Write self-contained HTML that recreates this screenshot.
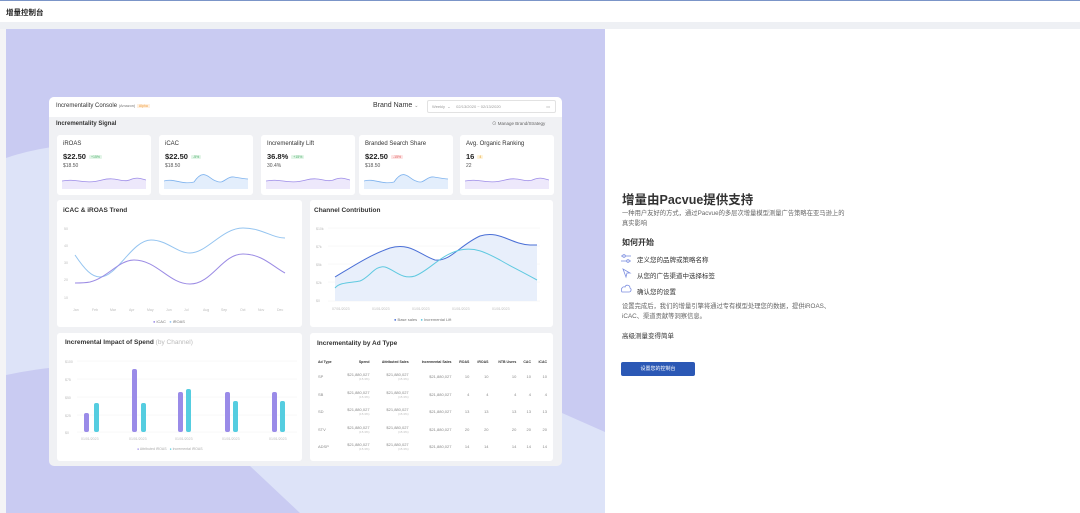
<!DOCTYPE html>
<html><head><meta charset="utf-8"><style>
*{margin:0;padding:0;box-sizing:border-box}
body{width:1080px;height:513px;overflow:hidden;background:#fff;font-family:"Liberation Sans","Noto Sans CJK SC",sans-serif;position:relative;color:#333}
.a{position:absolute}
.p{position:absolute;background:#fff;border-radius:3px}
.t{font-size:6.5px;color:#333;font-weight:bold}
.k{position:absolute;background:#fff;border-radius:3px;top:135px;height:60px;width:94px}
.k .n{position:absolute;left:6px;top:6px;font-size:6px;color:#333}
.k .v{position:absolute;left:6px;top:17px;font-size:7.5px;font-weight:bold;color:#222}
.k .b{font-size:3.5px;padding:0 2px;border-radius:1px;margin-left:3px;font-weight:normal;vertical-align:middle}
.k .s{position:absolute;left:6px;top:28px;font-size:5px;color:#555}
.k svg{position:absolute;left:5px;top:38px}
.g{background:#e3f5e8;color:#4caf6a}
.r{background:#fde4e4;color:#e06060}
.o{background:#fff3d9;color:#e0a030}
.ax{font-size:3.5px;fill:#bbb}
table{border-collapse:collapse;font-size:4px;color:#888}
td,th{height:17.5px;text-align:right;padding:0 2px}
th{font-size:3.5px;color:#333;height:13px}
td small{display:block;font-size:3px;color:#bbb}
.step{position:absolute;left:637px;font-size:6.5px;color:#333}
</style></head><body>
<div class="a" style="left:0;top:0;width:1080px;height:1px;background:#7b95c8"></div>
<div class="a" style="left:6px;top:7px;font-size:7.5px;font-weight:bold;color:#222">增量控制台</div>
<div class="a" style="left:0;top:22px;width:1080px;height:7px;background:#eef0f4"></div>
<div class="a" style="left:0;top:29px;width:6px;height:484px;background:#f4f4f6"></div>
<svg class="a" style="left:6px;top:29px" width="599" height="484">
<rect width="599" height="484" fill="#c9cbf2"/>
<path d="M0 129 C15 124 30 120 60 116 L556 116 L556 384 L599 403 L599 484 L294 484 L244 437 L100 437 L43 339 C25 341 10 344 0 346 Z" fill="#dde3f8"/>
</svg>
<!-- card -->
<div class="a" style="left:49px;top:97px;width:513px;height:369px;background:#f0f1f4;border-radius:5px;overflow:hidden">
<div class="a" style="left:0;top:0;width:513px;height:20px;background:#fff"></div>
<div class="a" style="left:7px;top:6px;font-size:6px;color:#333">Incrementality Console <span style="font-size:3.8px;color:#777">(Amazon)</span> <span style="font-size:3.5px;background:#fff0e0;color:#f0a040;padding:0 2px">Alpha</span></div>
<div class="a" style="left:324px;top:5px;font-size:7px;color:#333">Brand Name <span style="font-size:5px;color:#888">⌄</span></div>
<div class="a" style="left:378px;top:3px;width:129px;height:13px;border:1px solid #e2e2e2;border-radius:2px;font-size:4px;color:#999;line-height:11px;padding-left:4px">Weekly &nbsp;⌄ &nbsp;&nbsp;&nbsp; 02/13/2020 ~ 02/13/2020<span style="position:absolute;right:5px">▭</span></div>
<div class="a t" style="left:7px;top:24px;font-size:6px">Incrementality Signal</div>
<div class="a" style="left:443px;top:24px;font-size:4.5px;color:#666">⊙ Manage Brand/Strategy</div>
</div>
<div class="k" style="left:57px"><div class="n">iROAS</div><div class="v">$22.50<span class="b g">+15%</span></div><div class="s">$18.50</div><svg width="84" height="16"><path d="M0 8 C15 5 22 12 40 7 C55 3 60 11 70 6 C76 4 80 6 84 7 L84 16 L0 16Z" fill="#ede8fb"/><path d="M0 8 C15 5 22 12 40 7 C55 3 60 11 70 6 C76 4 80 6 84 7" fill="none" stroke="#9d8ce8" stroke-width=".8"/></svg></div>
<div class="k" style="left:159px"><div class="n">iCAC</div><div class="v">$22.50<span class="b g">-5%</span></div><div class="s">$18.50</div><svg width="84" height="16"><path d="M0 8 C10 5 18 12 30 9 C40 -6 45 6 52 8 C60 12 62 3 70 4 C76 5 80 6 84 6 L84 16 L0 16Z" fill="#e3eefc"/><path d="M0 8 C10 5 18 12 30 9 C40 -6 45 6 52 8 C60 12 62 3 70 4 C76 5 80 6 84 6" fill="none" stroke="#7fb3ee" stroke-width=".8"/></svg></div>
<div class="k" style="left:261px"><div class="n">Incrementality Lift</div><div class="v">36.8%<span class="b g">+15%</span></div><div class="s">30.4%</div><svg width="84" height="16"><path d="M0 8 C15 5 22 12 40 7 C55 3 60 11 70 6 C76 4 80 6 84 7 L84 16 L0 16Z" fill="#ede8fb"/><path d="M0 8 C15 5 22 12 40 7 C55 3 60 11 70 6 C76 4 80 6 84 7" fill="none" stroke="#9d8ce8" stroke-width=".8"/></svg></div>
<div class="k" style="left:359px"><div class="n">Branded Search Share</div><div class="v">$22.50<span class="b r">-15%</span></div><div class="s">$18.50</div><svg width="84" height="16"><path d="M0 8 C10 5 18 12 30 9 C40 -6 45 6 52 8 C60 12 62 3 70 4 C76 5 80 6 84 6 L84 16 L0 16Z" fill="#e3eefc"/><path d="M0 8 C10 5 18 12 30 9 C40 -6 45 6 52 8 C60 12 62 3 70 4 C76 5 80 6 84 6" fill="none" stroke="#7fb3ee" stroke-width=".8"/></svg></div>
<div class="k" style="left:460px"><div class="n">Avg. Organic Ranking</div><div class="v">16<span class="b o">4</span></div><div class="s">22</div><svg width="84" height="16"><path d="M0 8 C15 5 22 12 40 7 C55 3 60 11 70 6 C76 4 80 6 84 7 L84 16 L0 16Z" fill="#ede8fb"/><path d="M0 8 C15 5 22 12 40 7 C55 3 60 11 70 6 C76 4 80 6 84 7" fill="none" stroke="#9d8ce8" stroke-width=".8"/></svg></div>

<div class="p" style="left:57px;top:200px;width:245px;height:127px">
<div class="a t" style="left:6px;top:7px">iCAC &amp; iROAS Trend</div>
<svg class="a" style="left:0;top:0" width="245" height="127">
<g class="ax"><text x="7" y="30">50</text><text x="7" y="47">40</text><text x="7" y="64">30</text><text x="7" y="81">20</text><text x="7" y="99">10</text>
<text x="16" y="111">Jan</text><text x="35" y="111">Feb</text><text x="53" y="111">Mar</text><text x="72" y="111">Apr</text><text x="90" y="111">May</text><text x="109" y="111">Jun</text><text x="127" y="111">Jul</text><text x="146" y="111">Aug</text><text x="164" y="111">Sep</text><text x="183" y="111">Oct</text><text x="201" y="111">Nov</text><text x="220" y="111">Dec</text></g>
<path d="M18 55 C28 70 35 77 43 77 C60 77 75 40 94 40 C110 40 120 53 133 53 C150 53 165 28 186 28 C205 28 215 38 228 38" fill="none" stroke="#94c4f0" stroke-width="1"/>
<path d="M18 83 C25 83 28 83 33 82 C50 78 62 60 77 60 C100 60 112 84 133 84 C155 84 165 54 186 54 C205 54 215 66 228 73" fill="none" stroke="#9b8be4" stroke-width="1"/>
</svg>
<div class="a" style="left:96px;top:119px;font-size:4px;color:#777"><span style="color:#9b8be4">●</span> iCAC &nbsp; <span style="color:#94c4f0">●</span> iROAS</div>
</div>

<div class="p" style="left:310px;top:200px;width:243px;height:127px">
<div class="a t" style="left:4px;top:7px">Channel Contribution</div>
<svg class="a" style="left:0;top:0" width="243" height="127">
<g stroke="#f0f0f0" stroke-width=".5"><line x1="18" y1="28" x2="230" y2="28"/><line x1="18" y1="46" x2="230" y2="46"/><line x1="18" y1="64" x2="230" y2="64"/><line x1="18" y1="82" x2="230" y2="82"/><line x1="18" y1="101" x2="230" y2="101"/></g>
<g class="ax"><text x="6" y="30">$10k</text><text x="6" y="48">$7k</text><text x="6" y="66">$5k</text><text x="6" y="84">$2k</text><text x="6" y="102">$0</text>
<text x="22" y="110">07/01/2023</text><text x="62" y="110">01/01/2023</text><text x="102" y="110">01/01/2023</text><text x="142" y="110">01/01/2023</text><text x="182" y="110">01/01/2023</text></g>
<path d="M25 77 C45 65 60 55 80 48 C100 42 110 55 125 60 C140 62 150 45 170 36 C190 30 200 44 220 45 L227 45 L227 101 L25 101Z" fill="#e8effb"/>
<path d="M25 77 C45 65 60 55 80 48 C100 42 110 55 125 60 C140 62 150 45 170 36 C190 30 200 44 220 45 L227 45" fill="none" stroke="#4a6fd6" stroke-width="1"/>
<path d="M25 88 C30 82 40 83 50 81 C60 77 65 65 75 67 C85 70 92 80 105 76 C120 70 130 55 150 50 C165 47 175 52 190 60 C200 66 205 68 227 80" fill="none" stroke="#5fc9e0" stroke-width="1"/>
</svg>
<div class="a" style="left:84px;top:117px;font-size:4px;color:#777"><span style="color:#4a6fd6">●</span> Base sales &nbsp; <span style="color:#5fc9e0">●</span> Incremental Lift</div>
</div>

<div class="p" style="left:57px;top:333px;width:245px;height:128px">
<div class="a t" style="left:8px;top:6px">Incremental Impact of Spend <span style="font-weight:normal;color:#bbb">(by Channel)</span></div>
<svg class="a" style="left:0;top:0" width="245" height="128">
<g stroke="#f0f0f0" stroke-width=".5"><line x1="20" y1="28" x2="240" y2="28"/><line x1="20" y1="46" x2="240" y2="46"/><line x1="20" y1="64" x2="240" y2="64"/><line x1="20" y1="82" x2="240" y2="82"/><line x1="20" y1="99" x2="240" y2="99"/></g>
<g class="ax"><text x="8" y="30">$100</text><text x="8" y="48">$75</text><text x="8" y="66">$50</text><text x="8" y="84">$25</text><text x="8" y="101">$0</text>
<text x="24" y="107">01/01/2023</text><text x="72" y="107">01/01/2023</text><text x="118" y="107">01/01/2023</text><text x="165" y="107">01/01/2023</text><text x="212" y="107">01/01/2023</text></g>
<g fill="#9a8be8"><rect x="27" y="80" width="5" height="19" rx="2"/><rect x="75" y="36" width="5" height="63" rx="2"/><rect x="121" y="59" width="5" height="40" rx="2"/><rect x="168" y="59" width="5" height="40" rx="2"/><rect x="215" y="59" width="5" height="40" rx="2"/></g>
<g fill="#55cde0"><rect x="37" y="70" width="5" height="29" rx="2"/><rect x="84" y="70" width="5" height="29" rx="2"/><rect x="129" y="56" width="5" height="43" rx="2"/><rect x="176" y="68" width="5" height="31" rx="2"/><rect x="223" y="68" width="5" height="31" rx="2"/></g>
</svg>
<div class="a" style="left:80px;top:114px;font-size:3.5px;color:#aaa"><span style="color:#9a8be8">●</span> Attributed iROAS &nbsp; <span style="color:#55cde0">●</span> Incremental iROAS</div>
</div>

<div class="p" style="left:310px;top:333px;width:243px;height:128px">
<div class="a t" style="left:7px;top:7px">Incrementality by Ad Type</div>
<table class="a" style="left:6px;top:22px;width:233px">
<tr><th style="text-align:left">Ad Type</th><th>Spend</th><th>Attributed Sales</th><th>Incremental Sales</th><th>ROAS</th><th>iROAS</th><th>NTB Users</th><th>CAC</th><th>iCAC</th></tr>
<tr><td style="text-align:left">SP</td><td>$21,880,027<small>(15.3%)</small></td><td>$21,880,027<small>(15.3%)</small></td><td>$21,880,027</td><td>10</td><td>10</td><td>10</td><td>10</td><td>10</td></tr>
<tr><td style="text-align:left">SB</td><td>$21,880,027<small>(15.3%)</small></td><td>$21,880,027<small>(15.3%)</small></td><td>$21,880,027</td><td>4</td><td>4</td><td>4</td><td>4</td><td>4</td></tr>
<tr><td style="text-align:left">SD</td><td>$21,880,027<small>(15.3%)</small></td><td>$21,880,027<small>(15.3%)</small></td><td>$21,880,027</td><td>13</td><td>13</td><td>13</td><td>13</td><td>13</td></tr>
<tr><td style="text-align:left">STV</td><td>$21,880,027<small>(15.3%)</small></td><td>$21,880,027<small>(15.3%)</small></td><td>$21,880,027</td><td>20</td><td>20</td><td>20</td><td>20</td><td>20</td></tr>
<tr><td style="text-align:left">ADSP</td><td>$21,880,027<small>(15.3%)</small></td><td>$21,880,027<small>(15.3%)</small></td><td>$21,880,027</td><td>14</td><td>14</td><td>14</td><td>14</td><td>14</td></tr>
</table>
</div>

<!-- right -->
<div class="a" style="left:622px;top:189px;font-size:12.5px;font-weight:bold;color:#333">增量由Pacvue提供支持</div>
<div class="a" style="left:622px;top:209px;width:225px;font-size:6.3px;line-height:10px;color:#666">一种用户友好的方式，通过Pacvue的多层次增量模型测量广告策略在亚马逊上的真实影响</div>
<div class="a" style="left:622px;top:237px;font-size:8px;font-weight:bold;color:#333">如何开始</div>
<svg class="a" style="left:621px;top:254px" width="11" height="40"><g fill="none" stroke="#7c8ee0" stroke-width=".8"><line x1="0" y1="2" x2="10" y2="2"/><circle cx="3" cy="2" r="1.3" fill="#fff"/><line x1="0" y1="7" x2="10" y2="7"/><circle cx="7" cy="7" r="1.3" fill="#fff"/><path d="M2 15 L5 23 L6 19 L9 19 Z"/><path d="M1 38 C-1 35 2 32 4 33 C5 30 9 31 9 34 C11 35 10 38 8 38 Z"/></g></svg>
<div class="step" style="top:254px">定义您的品牌或策略名称</div>
<div class="step" style="top:270px">从您的广告渠道中选择标签</div>
<div class="step" style="top:286px">确认您的设置</div>
<div class="a" style="left:622px;top:302px;width:225px;font-size:6.3px;line-height:10px;color:#666">设置完成后，我们的增量引擎将通过专有模型处理您的数据，提供iROAS、iCAC、渠道贡献等洞察信息。</div>
<div class="a" style="left:622px;top:330px;font-size:6.5px;color:#333">高级测量变得简单</div>
<div class="a" style="left:621px;top:362px;width:74px;height:14px;background:#2b58b5;border-radius:2px;color:#fff;font-size:5px;text-align:center;line-height:14px">设置您的控制台</div>
</body></html>
